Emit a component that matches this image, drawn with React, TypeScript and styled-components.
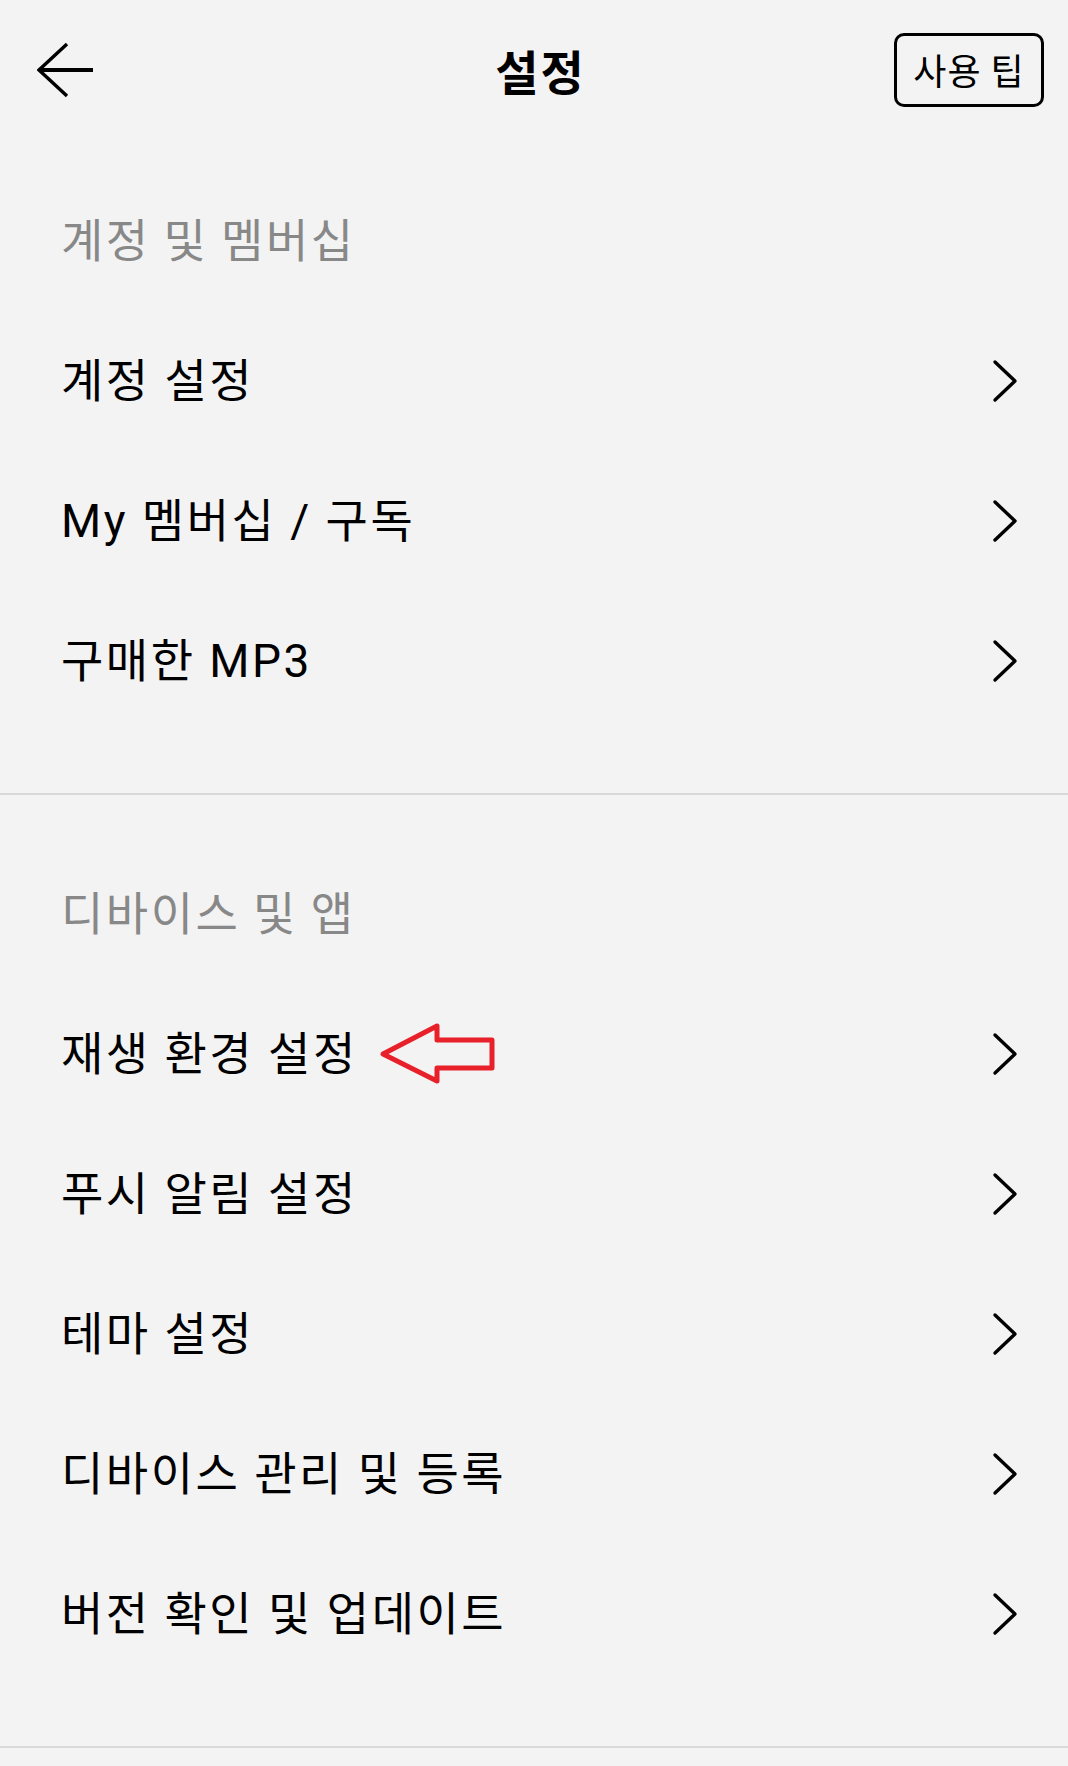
import styled, { createGlobalStyle } from "styled-components";

const GlobalStyle = createGlobalStyle`
  html, body {
    margin: 0;
    padding: 0;
    background: #f3f3f3;
  }
  body {
    font-family: Roboto, "Noto Sans CJK KR", sans-serif;
    color: #000;
  }
`;

const Page = styled.div`
  width: 1068px;
  min-height: 1766px;
  background: #f3f3f3;
`;

const Header = styled.header`
  height: 104px;
  margin-top: 18px;
  padding: 0 24px 0 37px;
  display: grid;
  grid-template-columns: 1fr auto 1fr;
  align-items: center;
`;

const BackButton = styled.button`
  justify-self: start;
  display: flex;
  padding: 0;
  border: 0;
  background: none;
`;

const Title = styled.h1`
  margin: 0;
  font-family: "Noto Sans CJK KR", sans-serif;
  font-size: 47px;
  font-weight: 700;
  line-height: 60px;
  letter-spacing: 2px;
`;

const TipButton = styled.button`
  justify-self: end;
  width: 150px;
  height: 74px;
  box-sizing: border-box;
  border: 3px solid #000;
  border-radius: 10px;
  background: transparent;
  font-family: "Noto Sans CJK KR", sans-serif;
  font-size: 36px;
  letter-spacing: 1px;
  color: #000;
  padding: 0 0 2px;
`;

const Section = styled.section`
  padding-bottom: 62px;
  border-bottom: 2px solid #d9d9d9;
`;

const SectionTitle = styled.h2`
  margin: 0;
  padding: 85px 61px 44px;
  font-family: "Noto Sans CJK KR", sans-serif;
  font-size: 46px;
  font-weight: 400;
  line-height: 60px;
  letter-spacing: 2.5px;
  color: #888;
`;

const Row = styled.div`
  height: 140px;
  padding: 0 50px 0 61px;
  display: flex;
  align-items: center;
  justify-content: space-between;
`;

const Label = styled.span`
  display: flex;
  align-items: center;
  font-size: 46px;
  line-height: 60px;
  letter-spacing: 2.5px;
`;

const Marker = styled.svg`
  margin-left: 22px;
`;

const BackIcon = () => (
  <svg width="58" height="56" viewBox="0 0 58 56" fill="none">
    <path d="M30 2 L2 28 L30 54" stroke="#000" strokeWidth="3.4" />
    <path d="M3 28 H56" stroke="#000" strokeWidth="4" />
  </svg>
);

const Chevron = () => (
  <svg width="26" height="44" viewBox="0 0 26 44" fill="none">
    <polyline
      points="3,3 23,22 3,41"
      stroke="#000"
      strokeWidth="3.4"
      strokeLinecap="round"
      strokeLinejoin="round"
    />
  </svg>
);

const RedArrow = () => (
  <Marker width="118" height="62" viewBox="0 0 118 62" fill="none">
    <polygon
      points="3,31 57,3 57,17 112,17 112,45 57,45 57,58"
      stroke="#e8202a"
      strokeWidth="5"
      strokeLinejoin="round"
    />
  </Marker>
);

type Item = { label: string; marked?: boolean };

const sections: { title: string; items: Item[] }[] = [
  {
    title: "계정 및 멤버십",
    items: [{ label: "계정 설정" }, { label: "My 멤버십 / 구독" }, { label: "구매한 MP3" }],
  },
  {
    title: "디바이스 및 앱",
    items: [
      { label: "재생 환경 설정", marked: true },
      { label: "푸시 알림 설정" },
      { label: "테마 설정" },
      { label: "디바이스 관리 및 등록" },
      { label: "버전 확인 및 업데이트" },
    ],
  },
];

export default function App() {
  return (
    <Page>
      <GlobalStyle />
      <Header>
        <BackButton aria-label="뒤로">
          <BackIcon />
        </BackButton>
        <Title>설정</Title>
        <TipButton>사용 팁</TipButton>
      </Header>
      {sections.map((section) => (
        <Section key={section.title}>
          <SectionTitle>{section.title}</SectionTitle>
          {section.items.map((item) => (
            <Row key={item.label}>
              <Label>
                {item.label}
                {item.marked && <RedArrow />}
              </Label>
              <Chevron />
            </Row>
          ))}
        </Section>
      ))}
    </Page>
  );
}
